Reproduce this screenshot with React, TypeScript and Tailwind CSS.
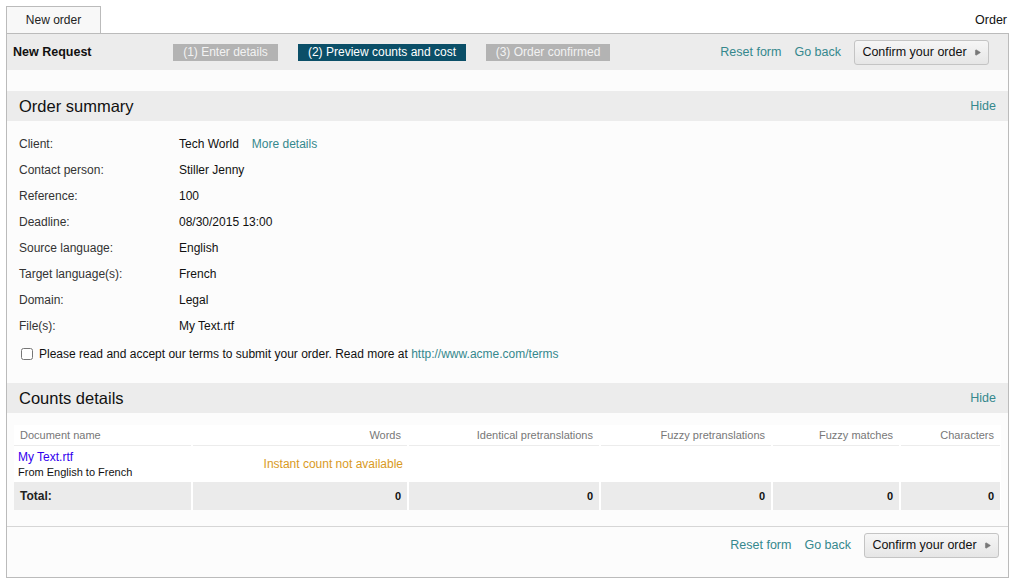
import { Play } from "lucide-react";

const summary: [string, string][] = [
  ["Client:", "Tech World"],
  ["Contact person:", "Stiller Jenny"],
  ["Reference:", "100"],
  ["Deadline:", "08/30/2015 13:00"],
  ["Source language:", "English"],
  ["Target language(s):", "French"],
  ["Domain:", "Legal"],
  ["File(s):", "My Text.rtf"],
];

const cols = ["Words", "Identical pretranslations", "Fuzzy pretranslations", "Fuzzy matches", "Characters"];

function ConfirmButton() {
  return (
    <button className="h-[25px] w-[135px] flex items-center justify-center gap-[7px] rounded-[3px] border border-[#c4c4c4] bg-gradient-to-b from-[#f6f6f6] to-[#e6e6e6] text-[12.5px] text-[#111]">
      Confirm your order
      <Play className="w-[7px] h-[7px] text-[#777] fill-[#777]" />
    </button>
  );
}

function Actions() {
  return (
    <div className="flex items-center text-[12.5px] text-[#35888d]">
      <a className="mr-[13px]">Reset form</a>
      <a className="mr-[13px]">Go back</a>
      <ConfirmButton />
    </div>
  );
}

function SectionHeader({ title }: { title: string }) {
  return (
    <div className="h-[30px] bg-[#ececec] flex items-center justify-between pl-[12px] pr-[12px]">
      <span className="text-[16.5px] text-[#111]">{title}</span>
      <a className="text-[12.5px] text-[#35888d]">Hide</a>
    </div>
  );
}

export default function App() {
  return (
    <div className="w-[1015px] h-[587px] bg-white px-[6px] pt-[6px] text-[#222]" style={{ fontFamily: '"Liberation Sans", Arial, sans-serif' }}>
      <div className="flex items-end justify-between">
        <div className="w-[95px] h-[28px] -mb-px border border-[#bbb] bg-[#f8f8f8] flex items-center justify-center text-[12px] text-[#222]">
          New order
        </div>
        <span className="text-[12.5px] text-[#111] mb-[3px] mr-[2px]">Order</span>
      </div>
      <div className="h-[545px] border border-[#bbb] bg-[#fcfcfc] flex flex-col">
        <div className="h-[36px] shrink-0 bg-[#ececec] flex items-center pl-[6px] pr-[19px]">
          <span className="w-[160px] text-[12.5px] font-bold text-[#111]">New Request</span>
          <div className="flex items-center gap-[20px] text-[12px]">
            <span className="h-[17px] w-[105px] flex items-center justify-center bg-[#b3b3b3] text-[#f2f2f2]">(1) Enter details</span>
            <span className="h-[17px] w-[168px] flex items-center justify-center bg-[#0b4f68] text-white">(2) Preview counts and cost</span>
            <span className="h-[17px] w-[124px] flex items-center justify-center bg-[#b3b3b3] text-[#f2f2f2]">(3) Order confirmed</span>
          </div>
          <div className="ml-auto">
            <Actions />
          </div>
        </div>

        <div className="mt-[21px]">
          <SectionHeader title="Order summary" />
          <div className="pt-[10px] pl-[12px] text-[12px]">
            {summary.map(([k, v]) => (
              <div key={k} className="h-[26px] flex items-center">
                <span className="w-[160px] text-[#333]">{k}</span>
                <span className="text-[#111]">{v}</span>
                {k === "Client:" && <a className="ml-[13px] text-[#35888d]">More details</a>}
              </div>
            ))}
            <label className="mt-[1px] h-[28px] flex items-center text-[12px] text-[#111]">
              <input type="checkbox" className="ml-[2px] mr-[6px] w-[12px] h-[12px]" />
              Please read and accept our terms to submit your order. Read more at&nbsp;
              <a className="text-[#35888d]">http://www.acme.com/terms</a>
            </label>
          </div>
        </div>

        <div className="mt-[15px]">
          <SectionHeader title="Counts details" />
          <div className="mt-[12px] mx-[7px] bg-white grid grid-cols-[177px_214px_190px_170px_126px_99px] gap-x-[2px] text-[11px]">
            <div className="h-[21px] flex items-center pl-[6px] border-b border-[#ececec] text-[#777]">Document name</div>
            {cols.map((c) => (
              <div key={c} className="h-[21px] flex items-center justify-end pr-[6px] border-b border-[#ececec] text-[#777]">{c}</div>
            ))}

            <div className="h-[36px] flex flex-col justify-center pl-[4px]">
              <a className="text-[12px] text-[#3300ee] leading-[15px]">My Text.rtf</a>
              <span className="text-[11px] text-[#111] leading-[14px]">From English to French</span>
            </div>
            <div className="h-[36px] flex items-center justify-end pr-[4px] text-[12px] text-[#d99a1e]">Instant count not available</div>
            <div /><div /><div /><div />

            <div className="h-[28px] bg-[#ebebeb] flex items-center pl-[6px] text-[12px] font-bold text-[#222]">Total:</div>
            {cols.map((c) => (
              <div key={c} className="h-[28px] bg-[#ebebeb] flex items-center justify-end pr-[6px] font-bold text-[#111]">0</div>
            ))}
          </div>
        </div>

        <div className="mt-[16px] flex-1 border-t border-[#d6d6d6] flex items-start justify-end pt-[6px] pr-[9px]">
          <Actions />
        </div>
      </div>
    </div>
  );
}
